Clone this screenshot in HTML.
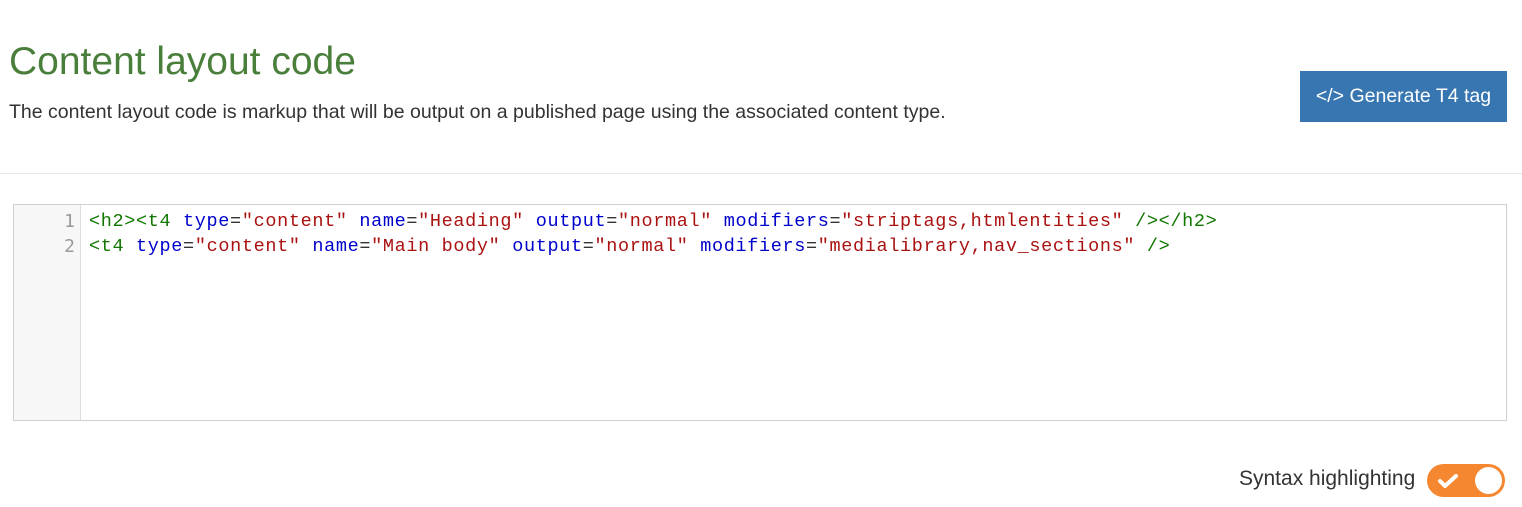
<!DOCTYPE html>
<html><head><style>
body{margin:0;width:1522px;height:507px;background:#fff;font-family:"Liberation Sans",sans-serif;position:relative;overflow:hidden}
h1{position:absolute;left:9px;top:40px;margin:0;font-weight:normal;font-size:39px;color:#4a7f3b}
.sub{position:absolute;left:9px;top:101px;font-size:19.5px;color:#333}
.btn{position:absolute;left:1300px;top:71px;width:207px;height:51px;background:#3776b0;color:#fff;font-size:19.5px;line-height:51px;text-align:center}
.hr{position:absolute;left:0;right:0;top:173px;border-top:1px solid #e8e8e8}
.code{position:absolute;left:13px;top:204px;width:1492px;height:215px;border:1px solid #d0d0d0}
.gut{position:absolute;left:0;top:0;width:66px;height:100%;background:#f7f7f7;border-right:1px solid #ddd}
.ln{position:absolute;right:5px;color:#999;font:18px "DejaVu Sans Mono",monospace}
.line{position:absolute;left:75px;white-space:pre;font:18.5px "Liberation Mono",monospace;letter-spacing:0.65px}
.t{color:#170}.a{color:#00c}.s{color:#a11}.p{color:#333}
.lbl{position:absolute;left:1239px;top:467px;font-size:21px;color:#333}
.tog{position:absolute;left:1427px;top:464px;width:78px;height:33px;border-radius:17px;background:#f68731}
.knob{position:absolute;right:3px;top:3px;width:27px;height:27px;border-radius:50%;background:#fff}
</style></head><body>
<h1>Content layout code</h1>
<div class="sub">The content layout code is markup that will be output on a published page using the associated content type.</div>
<div class="btn">&lt;/&gt; Generate T4 tag</div>
<div class="hr"></div>
<div class="code"><div class="gut"><div class="ln" style="top:6px">1</div><div class="ln" style="top:31px">2</div></div>
<div class="line" style="top:6px"><span class="t">&lt;h2&gt;&lt;t4</span> <span class="a">type</span><span class="p">=</span><span class="s">"content"</span> <span class="a">name</span><span class="p">=</span><span class="s">"Heading"</span> <span class="a">output</span><span class="p">=</span><span class="s">"normal"</span> <span class="a">modifiers</span><span class="p">=</span><span class="s">"striptags,htmlentities"</span> <span class="t">/&gt;&lt;/h2&gt;</span></div>
<div class="line" style="top:31px"><span class="t">&lt;t4</span> <span class="a">type</span><span class="p">=</span><span class="s">"content"</span> <span class="a">name</span><span class="p">=</span><span class="s">"Main body"</span> <span class="a">output</span><span class="p">=</span><span class="s">"normal"</span> <span class="a">modifiers</span><span class="p">=</span><span class="s">"medialibrary,nav_sections"</span> <span class="t">/&gt;</span></div>
</div>
<div class="lbl">Syntax highlighting</div>
<div class="tog"><svg style="position:absolute;left:10px;top:9px" width="22" height="16" viewBox="0 0 22 16"><path d="M3 8l5 5L19 3" stroke="#fff" stroke-width="4" fill="none" stroke-linecap="round" stroke-linejoin="round"/></svg><div class="knob"></div></div>
</body></html>
